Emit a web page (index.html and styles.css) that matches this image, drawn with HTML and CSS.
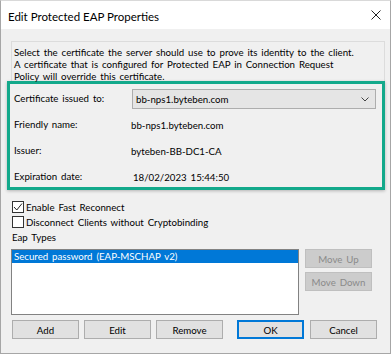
FILE: index.html
```html
<!DOCTYPE html>
<html lang="en">
<head>
    <meta charset="UTF-8">
    <title>Edit Protected EAP Properties</title>
    <link rel="stylesheet" href="styles.css">
</head>
<body>
    <div class="window">
        <!-- Title bar -->
        <div class="titlebar">
            <span class="title">Edit Protected EAP Properties</span>
            <svg class="close" width="10" height="10" viewBox="0 0 10 10">
                <path d="M0.5 0.5 L9.5 9.5 M9.5 0.5 L0.5 9.5" stroke="#222" stroke-width="1" fill="none"/>
            </svg>
        </div>

        <div class="dialog">
            <!-- Certificate group -->
            <div class="group">
                <p class="intro">Select the certificate the server should use to prove its identity to the client.<br>A certificate that is configured for Protected EAP in Connection Request<br>Policy will override this certificate.</p>

                <div class="cert-box">
                    <div class="cert-row">
                        <span class="label">Certificate issued to:</span>
                        <div class="combo">
                            <span>bb-nps1.byteben.com</span>
                            <svg width="8" height="5" viewBox="0 0 8 5">
                                <path d="M0.5 0.5 L4 4 L7.5 0.5" stroke="#444" stroke-width="1" fill="none"/>
                            </svg>
                        </div>
                    </div>
                    <div class="cert-row">
                        <span class="label">Friendly name:</span>
                        <span class="value">bb-nps1.byteben.com</span>
                    </div>
                    <div class="cert-row">
                        <span class="label">Issuer:</span>
                        <span class="value">byteben-BB-DC1-CA</span>
                    </div>
                    <div class="cert-row">
                        <span class="label">Expiration date:</span>
                        <span class="value date">18/02/2023 15:44:50</span>
                    </div>
                </div>
            </div>

            <!-- Options -->
            <div class="options">
                <div class="check">
                    <span class="box">
                        <svg width="10" height="10" viewBox="0 0 10 10">
                            <path d="M1 5 L3.8 8 L9 1.5" stroke="#222" stroke-width="1" fill="none"/>
                        </svg>
                    </span>
                    <span>Enable Fast Reconnect</span>
                </div>
                <div class="check">
                    <span class="box"></span>
                    <span>Disconnect Clients without Cryptobinding</span>
                </div>
                <div class="types-label">Eap Types</div>
            </div>

            <div class="types">
                <div class="listbox">
                    <div class="item selected">Secured password (EAP-MSCHAP v2)</div>
                </div>
                <div class="side-buttons">
                    <button class="btn" disabled>Move Up</button>
                    <button class="btn" disabled>Move Down</button>
                </div>
            </div>

            <!-- Dialog buttons -->
            <div class="actions">
                <button class="btn">Add</button>
                <button class="btn">Edit</button>
                <button class="btn">Remove</button>
                <button class="btn default">OK</button>
                <button class="btn">Cancel</button>
            </div>
        </div>
    </div>
</body>
</html>
```

FILE: styles.css
```css
body {
    margin: 0;
    background: #fff;
    font-family: Lato, "Noto Sans", sans-serif;
    font-size: 9.7px;
    word-spacing: 1.4px;
    color: #000;
}

.window {
    width: 389px;
    height: 352px;
    border: 1px solid #a6a6a6;
    border-top-color: #d9d9d9;
    background: #f0f0f0;
}

/* Title bar */
.titlebar {
    height: 28px;
    background: #fff;
    display: flex;
    align-items: center;
    justify-content: space-between;
    padding: 0 9px 0 7px;
}

.title {
    font-size: 11.5px;
    word-spacing: normal;
    padding-top: 2px;
}

/* Dialog body */
.dialog {
    padding: 12px 0 0 10px;
}

.group {
    width: 372px;
    border: 1px solid #dcdcdc;
}

.intro {
    margin: 0;
    padding: 4px 0 0 2px;
    line-height: 12px;
}

.cert-box {
    margin: -1px -1px -1px -5px;
    padding: 5px 0 0 4px;
    height: 98px;
    border: 3px solid #13a98b;
    background: #f0f0f0;
    box-shadow: 0 1px 3px rgba(0, 0, 0, 0.25);
    display: grid;
    grid-auto-rows: 20px;
    row-gap: 6px;
}

.cert-row {
    display: flex;
    align-items: center;
}

.label {
    width: 117px;
    padding-bottom: 2px;
}

.value.date {
    padding-left: 2px;
}

.combo {
    width: 244px;
    height: 20px;
    margin-left: 1px;
    padding: 0 6px 0 3px;
    border: 1px solid #adadad;
    background: #e5e5e5;
    display: flex;
    align-items: center;
    justify-content: space-between;
    box-sizing: border-box;
}

/* Checkboxes */
.options {
    margin-top: 9px;
    padding-left: 1px;
}

.check {
    height: 15px;
    display: flex;
    align-items: center;
    gap: 2px;
}

.box {
    width: 10px;
    height: 10px;
    border: 1px solid #333;
    background: #fff;
    display: flex;
    align-items: center;
    justify-content: center;
}

.types-label {
    height: 16px;
    line-height: 16px;
    margin-bottom: 4px;
}

/* Eap types list */
.types {
    display: flex;
    gap: 6px;
}

.listbox {
    width: 286px;
    height: 64px;
    border: 1px solid #828282;
    background: #fff;
}

.item {
    height: 13px;
    line-height: 13px;
    padding-left: 2px;
}

.item.selected {
    background: #0078d7;
    color: #fff;
}

.side-buttons {
    display: flex;
    flex-direction: column;
    gap: 4px;
}

.btn {
    width: 67px;
    height: 19px;
    padding: 0;
    border: 1px solid #adadad;
    background: #e1e1e1;
    font-family: Lato, "Noto Sans", sans-serif;
    font-size: 9.7px;
    word-spacing: 1.4px;
    color: #000;
}

.btn:disabled {
    background: #cccccc;
    border-color: #bfbfbf;
    color: #8a8a8a;
}

.btn.default {
    border: 2px solid #0078d7;
}

.actions {
    margin-top: 5px;
    padding-left: 1px;
    display: flex;
}

.actions .btn {
    margin-right: 5px;
}

.actions .default {
    margin-left: 9px;
    margin-right: 6px;
}
```
